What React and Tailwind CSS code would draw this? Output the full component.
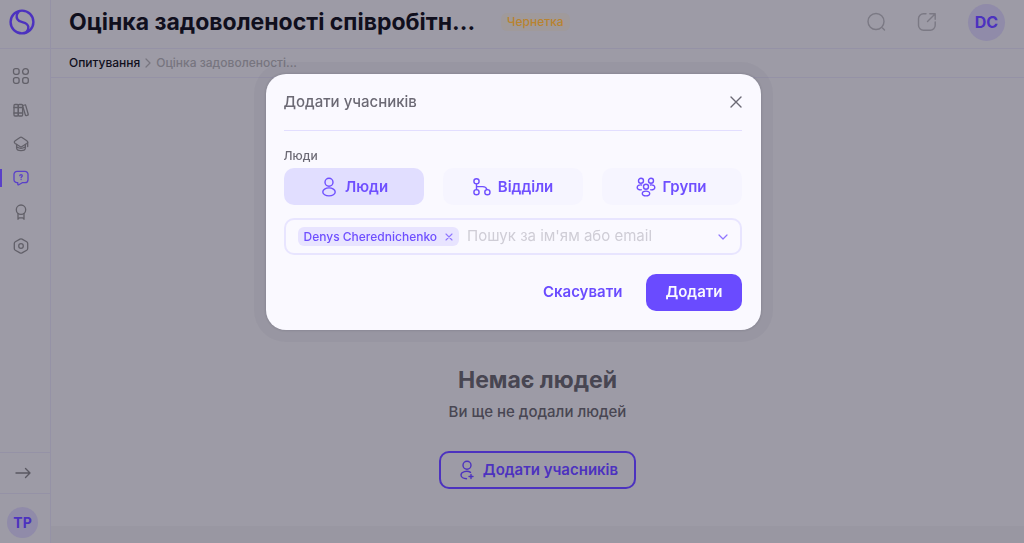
import { useState } from 'react';

const TABS = [
  { id: 'people', label: 'Люди', Icon: PersonIcon },
  { id: 'departments', label: 'Відділи', Icon: BranchIcon },
  { id: 'groups', label: 'Групи', Icon: GroupIcon },
];

const NAV = [
  { id: 'dashboard', label: 'Головна', Icon: GridIcon },
  { id: 'library', label: 'Бібліотека', Icon: BooksIcon },
  { id: 'learning', label: 'Навчання', Icon: CapIcon },
  { id: 'surveys', label: 'Опитування', Icon: SurveyIcon, active: true },
  { id: 'awards', label: 'Досягнення', Icon: AwardIcon },
  { id: 'settings', label: 'Налаштування', Icon: SettingsIcon },
];

function Svg({ size = 18, box = 18, width = 1.2, children }) {
  return (
    <svg
      width={size}
      height={size}
      viewBox={`0 0 ${box} ${box}`}
      fill="none"
      stroke="currentColor"
      strokeWidth={width}
      strokeLinecap="round"
      strokeLinejoin="round"
      className="shrink-0"
      aria-hidden="true"
    >
      {children}
    </svg>
  );
}

function LogoIcon() {
  return (
    <Svg size={26} box={26} width={2.4}>
      <circle cx="13" cy="13" r="11.4" />
      <path d="M9.500 3C7.600 5 7.200 8 8.500 10.300c1.100 2 3.300 2.400 5.500 3 2.600.7 4.700 1.800 5.300 4.200.4 1.700-.1 3.600-1.800 5.500" />
    </Svg>
  );
}

function GridIcon() {
  return (
    <Svg width={1.3}>
      <rect x="1.500" y="1.700" width="5.600" height="5.600" rx="2" />
      <circle cx="13.500" cy="4.500" r="2.900" />
      <rect x="1.500" y="10.700" width="5.600" height="5.600" rx="2" />
      <rect x="10.700" y="10.700" width="5.600" height="5.600" rx="2" />
    </Svg>
  );
}

function BooksIcon() {
  return (
    <Svg width={1.3}>
      <rect x="2" y="3.500" width="4.300" height="11.500" rx="1" />
      <rect x="6.300" y="3.500" width="4.300" height="11.500" rx="1" />
      <path d="M10.800 4.500l1.900-.6c.5-.2.900 0 1 .5l2.500 8.800c.1.500-.1.900-.6 1l-1.200.4c-.5.1-.9-.1-1-.6L10.800 5.500M2 6.500h8.600M2 12h8.600" />
    </Svg>
  );
}

function CapIcon() {
  return (
    <Svg width={1.3}>
      <path d="M8 2.500L3.200 5.700c-1.200.8-1.200 2 0 2.800L8 11.500c.6.4 1.400.4 2 0l4.800-3c1.200-.8 1.200-2 0-2.800L10 2.500c-.6-.4-1.400-.4-2 0z" />
      <path d="M4.600 9.500v3.200c0 1.700 2 2.900 4.400 2.900s4.400-1.200 4.400-2.900V9.500M5 12c2.500 1.600 5.500 1.600 8 0M15.700 7.500v4" />
    </Svg>
  );
}

function SurveyIcon() {
  return (
    <Svg width={1.3}>
      <path d="M5 2.300h8a3 3 0 013 3v5.400a3 3 0 01-3 3h-2.800L6.800 15.800c-.5.3-1 0-1-.5v-1.600H5a3 3 0 01-3-3V5.300a3 3 0 013-3z" />
      <path d="M7.800 6.700c0-1.500 2.500-1.500 2.500 0 0 .9-1.200 1-1.200 2M9.100 10.500v.1" />
    </Svg>
  );
}

function AwardIcon() {
  return (
    <Svg width={1.3}>
      <circle cx="9" cy="6.700" r="4.700" />
      <path d="M6 10.500v5.700M12 10.500v5.700M6 16.200l1.200-1.400h3.600l1.200 1.400" />
    </Svg>
  );
}

function SettingsIcon() {
  return (
    <Svg width={1.3}>
      <path d="M8 2.100L3.300 4.800c-.6.400-1 1-1 1.700v5c0 .7.400 1.300 1 1.700L8 15.900c.6.300 1.400.3 2 0l4.700-2.700c.6-.4 1-1 1-1.700v-5c0-.7-.4-1.300-1-1.700L10 2.100c-.6-.3-1.400-.3-2 0z" />
      <circle cx="9" cy="9" r="2.300" />
    </Svg>
  );
}

function PersonIcon() {
  return (
    <Svg size={20} box={20} width={1.4}>
      <circle cx="10" cy="5.300" r="4" />
      <ellipse cx="10" cy="14.900" rx="6.200" ry="4" />
    </Svg>
  );
}

function BranchIcon() {
  return (
    <Svg size={20} box={20} width={1.4}>
      <circle cx="4.500" cy="4.300" r="2.600" />
      <circle cx="4.500" cy="15.200" r="2.600" />
      <circle cx="15.400" cy="15.200" r="2.600" />
      <path d="M4.500 6.900v5.700M4.500 9.600h6.200c2.600 0 3.800 1.100 4.200 3" />
    </Svg>
  );
}

function GroupIcon() {
  return (
    <Svg size={20} box={20} width={1.4}>
      <circle cx="5" cy="3.700" r="2.500" />
      <circle cx="15" cy="3.700" r="2.500" />
      <circle cx="10" cy="9.800" r="2.500" />
      <ellipse cx="10" cy="16.500" rx="3.700" ry="2.400" />
      <path d="M5.600 8C3 7.600 1.200 8.800 1.200 10.500c0 1.600 1.800 2.500 4 2.300M14.400 8c2.600-.4 4.400.8 4.400 2.500 0 1.600-1.800 2.500-4 2.300" />
    </Svg>
  );
}

function AddPersonIcon() {
  return (
    <Svg size={20} box={20} width={1.4}>
      <circle cx="10" cy="5.200" r="4" />
      <path d="M13.500 12.300c-3.400-2.200-9.500-.6-9.500 2.700 0 2.300 2.700 3.700 5.500 3.700M14 14.500v4M12 16.500h4" />
    </Svg>
  );
}

function Sidebar() {
  return (
    <aside className="flex w-[51px] shrink-0 flex-col border-r border-[#9592a6]">
      <div className="flex h-[49px] items-center border-b border-[#9592a6] pb-1 pl-[9px] text-[#4c32bf]">
        <LogoIcon />
      </div>
      <nav className="flex flex-col gap-4 pt-[18px]">
        {NAV.map(({ id, label, Icon, active }) => (
          <a
            key={id}
            href={`#${id}`}
            aria-label={label}
            className={
              active
                ? 'flex h-[18px] items-center border-l-2 border-[#5a40c8] pl-[10px] text-[#5a40c8]'
                : 'flex h-[18px] items-center pl-3 text-[#626069]'
            }
          >
            <Icon />
          </a>
        ))}
      </nav>
      <button
        aria-label="Розгорнути меню"
        className="mt-auto flex h-[42px] items-center border-y border-[#9592a6] pl-[14px] text-[#5a5862]"
      >
        <Svg width={1.4}>
          <path d="M2 9h14M11.500 4.500L16 9l-4.500 4.500" />
        </Svg>
      </button>
      <div className="flex h-[49px] items-center pl-[7px] pt-2">
        <span className="flex size-[31px] items-center justify-center rounded-full bg-[#908ba9] text-sm font-bold text-[#4c32bf]">
          TP
        </span>
      </div>
    </aside>
  );
}

function Header() {
  return (
    <header className="flex h-[49px] items-center border-b border-[#9592a6] pb-1 pl-[18px] pr-[19px]">
      <h1 className="truncate text-[23px] font-bold text-[#100f1d]">
        Оцінка задоволеності співробітн...
      </h1>
      <span className="ml-[26px] rounded-md bg-[#a09a9b] px-[6px] text-xs font-medium leading-[18px] text-[#b9832f]">
        Чернетка
      </span>
      <div className="ml-auto flex items-center gap-[31px] text-[#7b7984]">
        <button aria-label="Пошук">
          <Svg size={20} box={20} width={1.4}>
            <circle cx="10" cy="9.500" r="8" />
            <path d="M16.500 16l2 2" />
          </Svg>
        </button>
        <button aria-label="Відкрити">
          <Svg size={20} box={20} width={1.4}>
            <path d="M9 1.800H6.500a5 5 0 00-5 5v6.400a5 5 0 005 5h6.700a5 5 0 005-5V10M10.500 9.500L18 2M12.800 1.800h5.400v5.400" />
          </Svg>
        </button>
        <button className="flex size-[37px] items-center justify-center rounded-full bg-[#908ba9] text-base font-bold text-[#4c32bf]">
          DC
        </button>
      </div>
    </header>
  );
}

function AddMembersDialog() {
  const [tab, setTab] = useState('people');
  const [query, setQuery] = useState('');

  return (
    <div className="fixed inset-0 flex items-start justify-center pl-[18px] pr-4 pt-[74px]">
      <div
        role="dialog"
        aria-labelledby="dialog-title"
        className="w-full max-w-[495px] rounded-[20px] bg-[#faf9ff] pb-[19px] pl-[18px] pr-[19px] shadow-[0_0_0_12px_rgba(60,58,75,0.04),0_0_3px_rgba(60,58,75,0.3)]"
      >
        <div className="flex h-[57px] items-center justify-between border-b border-[#e2deff]">
          <h2 id="dialog-title" className="text-[15px] font-medium text-[#6b6974]">
            Додати учасників
          </h2>
          <button aria-label="Закрити" className="flex size-3 items-center justify-center text-[#6b6974]">
            <Svg size={12} box={12} width={1.4}>
              <path d="M1 1l10 10M11 1L1 11" />
            </Svg>
          </button>
        </div>

        <p className="pt-4 text-xs font-medium leading-[18px] text-[#6b6974]">Люди</p>
        <div className="mt-[3px] grid grid-cols-3 gap-[19px]">
          {TABS.map(({ id, label, Icon }) => (
            <button
              key={id}
              onClick={() => setTab(id)}
              className={
                tab === id
                  ? 'flex h-[37px] items-center justify-center gap-[6px] rounded-[10px] bg-[#e1deff] pt-px text-[15px] font-semibold text-[#6f4fff]'
                  : 'flex h-[37px] items-center justify-center gap-[6px] rounded-[10px] bg-[#f6f5ff] pt-px text-[15px] font-semibold text-[#6f4fff]'
              }
            >
              <Icon />
              {label}
            </button>
          ))}
        </div>

        <div className="mt-[13px] flex h-[37px] items-center rounded-[10px] border-2 border-[#e8e5ff] pl-3 pr-3">
          <span className="flex h-[19px] shrink-0 items-center gap-2 rounded-md bg-[#e8e4ff] px-[6px] text-xs font-medium text-[#6f4fff]">
            Denys Cherednichenko
            <button aria-label="Прибрати" className="text-[#8f76ff]">
              <Svg size={8} box={8} width={1.1}>
                <path d="M1 1l6 6M7 1L1 7" />
              </Svg>
            </button>
          </span>
          <input
            aria-label="Пошук учасників"
            value={query}
            onChange={(e) => setQuery(e.target.value)}
            placeholder="Пошук за ім'ям або email"
            className="ml-2 min-w-0 flex-1 bg-transparent text-[15px] text-[#6b6974] outline-none placeholder:text-[#cfcdd6]"
          />
          <button aria-label="Показати список" className="text-[#8f76ff]">
            <Svg size={10} box={10}>
              <path d="M1 3l4 4 4-4" />
            </Svg>
          </button>
        </div>

        <div className="mt-[19px] flex items-center justify-end gap-6">
          <button className="text-[15px] font-semibold text-[#6a4bff]">Скасувати</button>
          <button className="h-[37px] rounded-[10px] bg-[#6a4bff] px-[19px] text-[15px] font-semibold text-[#faf9ff]">
            Додати
          </button>
        </div>
      </div>
    </div>
  );
}

export default function App() {
  return (
    <div className="flex min-h-screen bg-[#9d9ba6] font-['Inter',sans-serif]">
      <Sidebar />
      <div className="flex min-w-0 flex-1 flex-col">
        <Header />
        <div className="flex h-[29px] items-center gap-[3px] border-b border-[#9592a6] pl-[18px] text-xs font-medium">
          <a href="#surveys" className="text-[#100f1d]">Опитування</a>
          <Svg size={10} box={10}>
            <path d="M3 1l4 4-4 4" stroke="#77757f" />
          </Svg>
          <span className="text-[#77757f]">Оцінка задоволеності...</span>
        </div>
        <main className="flex flex-1 flex-col items-center justify-end pb-[37px]">
          <h2 className="text-[23px] font-bold leading-8 text-[#484652]">Немає людей</h2>
          <p className="mt-1 text-[15px] font-medium leading-6 text-[#484652]">Ви ще не додали людей</p>
          <button className="mt-[27px] flex h-[38px] items-center gap-[6px] rounded-[10px] border-2 border-[#4c32bf] px-4 text-[15px] font-semibold text-[#4c32bf]">
            <AddPersonIcon />
            Додати учасників
          </button>
        </main>
        <div className="h-[17px] bg-[#9997a2]" />
      </div>
      <AddMembersDialog />
    </div>
  );
}
